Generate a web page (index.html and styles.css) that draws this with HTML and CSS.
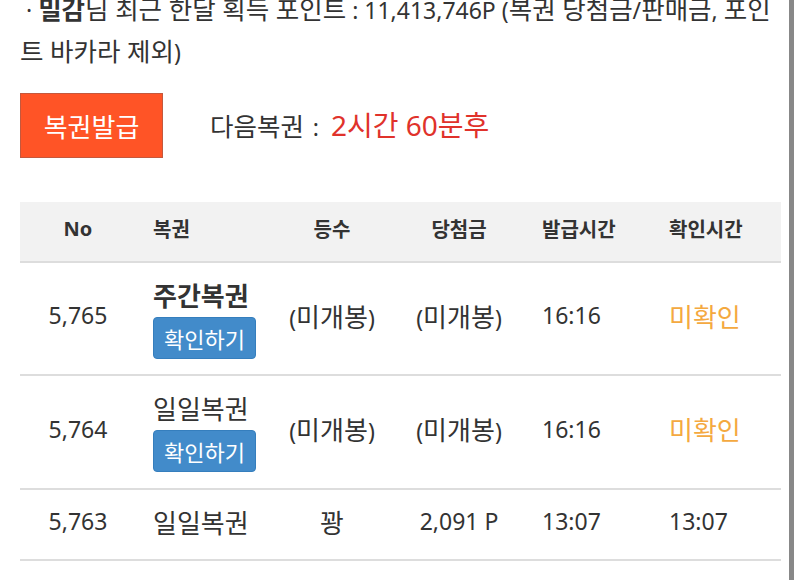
FILE: index.html
```html
<!DOCTYPE html>
<html lang="ko">
<head>
<meta charset="utf-8">
<link rel="stylesheet" href="styles.css">
</head>
<body>
<div class="page">
  <p class="info"><span class="en">&nbsp;·&nbsp;</span><b>밀감</b>님 최근 한달 획득 포인트<span class="en"> : 11,413,746P (</span>복권 당첨금<span class="en">/</span>판매금<span class="en">, </span>포인트 바카라 제외<span class="en">)</span></p>
  <div class="issue">
    <button class="btn-issue">복권발급</button>
    <span class="next">다음복권<span class="en colon">:</span><span class="red">2시간 60분후</span></span>
  </div>
  <div class="table">
    <div class="row head">
      <div class="c c-no">No</div>
      <div class="c c-name">복권</div>
      <div class="c c-rank">등수</div>
      <div class="c c-prize">당첨금</div>
      <div class="c c-time">발급시간</div>
      <div class="c c-check">확인시간</div>
    </div>
    <div class="row r1">
      <div class="c c-no en">5,765</div>
      <div class="c c-name block"><div class="nm bold">주간복권</div><button class="btn-check">확인하기</button></div>
      <div class="c c-rank"><span class="en">(</span>미개봉<span class="en">)</span></div>
      <div class="c c-prize"><span class="en">(</span>미개봉<span class="en">)</span></div>
      <div class="c c-time en">16:16</div>
      <div class="c c-check orange">미확인</div>
    </div>
    <div class="row r2">
      <div class="c c-no en">5,764</div>
      <div class="c c-name block"><div class="nm">일일복권</div><button class="btn-check">확인하기</button></div>
      <div class="c c-rank"><span class="en">(</span>미개봉<span class="en">)</span></div>
      <div class="c c-prize"><span class="en">(</span>미개봉<span class="en">)</span></div>
      <div class="c c-time en">16:16</div>
      <div class="c c-check orange">미확인</div>
    </div>
    <div class="row r3">
      <div class="c c-no en">5,763</div>
      <div class="c c-name">일일복권</div>
      <div class="c c-rank">꽝</div>
      <div class="c c-prize en">2,091 P</div>
      <div class="c c-time en">13:07</div>
      <div class="c c-check en">13:07</div>
    </div>
  </div>
</div>
<div class="scrollbar"></div>
</body>
</html>
```

FILE: styles.css
```css
html, body {
  margin: 0;
  padding: 0;
  background: #fff;
  overflow: hidden;
}
body {
  font-family: "Noto Sans", "Noto Sans CJK KR", sans-serif;
  color: #333;
  width: 800px;
  height: 580px;
}
.page {
  padding: 0 19px 0 20px;
}
.en {
  font-size: 23px;
  line-height: 1;
}
.info {
  margin: -12px 0 0 0;
  font-size: 25.5px;
  line-height: 42px;
  color: #333;
}
.info b {
  font-weight: 700;
}
.issue {
  display: flex;
  align-items: center;
  margin-top: 21px;
  gap: 47px;
}
.btn-issue {
  width: 143px;
  height: 65px;
  background: #ff5426;
  border: 1px solid #c4583d;
  color: #fff;
  font-family: inherit;
  font-size: 26px;
  padding: 0;
}
.next {
  font-size: 25.5px;
  line-height: 40px;
  color: #333;
}
.colon {
  margin: 0 12px 0 9px;
}
.red {
  color: #e0322b;
  font-size: 28px;
}
.table {
  margin-top: 44px;
  width: 761px;
}
.row {
  box-sizing: border-box;
  display: grid;
  grid-template-columns: 116px 134px 124px 130px 128px 129px;
  align-items: center;
  border-bottom: 2px solid #dddddd;
  font-size: 26px;
}
.row.head {
  background: #f2f2f2;
  height: 61px;
  font-size: 20px;
  font-weight: 700;
}
.row.r1 {
  height: 113px;
}
.row.r2 {
  height: 114px;
}
.row.r3 {
  height: 71px;
}
.head .c {
  font-size: 20px;
}
.c {
  white-space: nowrap;
  padding-bottom: 6px;
}
.c.block {
  padding-bottom: 0;
}
.c-no, .c-rank, .c-prize {
  text-align: center;
}
.c-name {
  padding-left: 17px;
}
.c-time {
  padding-left: 18px;
}
.c-check {
  padding-left: 17px;
}
.nm {
  font-size: 26px;
  line-height: 34px;
}
.bold {
  font-weight: 700;
}
.btn-check {
  margin-top: 4px;
  width: 103px;
  height: 42px;
  background: #428bca;
  border: 1px solid #357ebd;
  border-radius: 4px;
  color: #fff;
  font-family: inherit;
  font-size: 22px;
  padding: 0;
  display: block;
}
.orange {
  color: #f4a940;
}
.scrollbar {
  position: fixed;
  top: 0;
  left: 789px;
  width: 5px;
  height: 580px;
  background: #888;
}
```
